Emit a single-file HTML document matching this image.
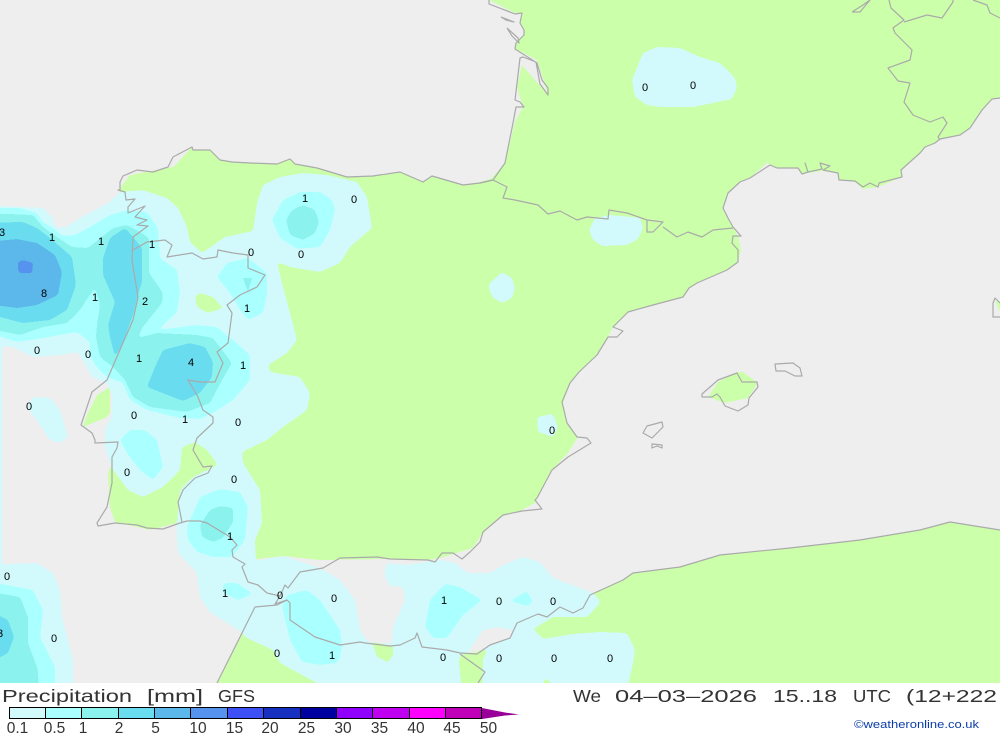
<!DOCTYPE html>
<html><head><meta charset="utf-8"><title>Precipitation GFS</title>
<style>html,body{margin:0;padding:0;background:#fff;width:1000px;height:733px;overflow:hidden}svg{display:block}text{font-family:"Liberation Sans",sans-serif}</style></head>
<body>
<svg width="1000" height="733" viewBox="0 0 1000 733" xmlns="http://www.w3.org/2000/svg">
<defs>
<filter id="s" filterUnits="userSpaceOnUse" x="-30" y="0" width="1060" height="733" color-interpolation-filters="sRGB">
<feGaussianBlur stdDeviation="1.8"/>
<feComponentTransfer><feFuncA type="discrete" tableValues="0 1"/></feComponentTransfer>
</filter>
<filter id="t" filterUnits="userSpaceOnUse" x="-30" y="0" width="1060" height="733" color-interpolation-filters="sRGB">
<feGaussianBlur stdDeviation="1"/>
<feComponentTransfer><feFuncA type="discrete" tableValues="0 1"/></feComponentTransfer>
</filter>
</defs>
<rect width="1000" height="683" fill="#eeeeee"/>
<polygon fill="#ccffaa" shape-rendering="crispEdges" points="489,0 515,13 522,13 520,23 524,30 523,37 516,43 516,49 537,60 543,78 548,95 522,65 517,87 523,107 515,122 505,163 492,178 480,182 463,185 432,176 423,182 400,172 373,176 347,177 317,168 295,164 290,159 277,164 250,163 232,162 220,160 210,150 193,150 192,147 180,160 173,167 130,175 120,188 120,200 140,300 140,440 110,468 108,473 110,507 115,522 150,530 177,523 200,530 250,560 283,556 320,560 390,559 428,560 440,558 473,548 480,537 483,532 500,517 520,511 535,503 537,498 552,470 568,453 578,437 567,422 563,403 570,383 579,372 597,355 608,337 613,327 628,312 653,305 683,297 689,288 697,283 727,270 738,262 741,250 738,236 728,218 723,208 728,193 740,182 750,178 767,163 777,168 798,168 802,174 822,171 838,173 839,180 855,182 863,189 878,187 902,177 901,170 920,153 925,147 935,143 940,139 960,135 970,128 982,110 992,99 1000,98 1000,0"/>
<g shape-rendering="crispEdges" fill="#ccffaa">
<polygon points="217,683 255,607 277,605 290,620 315,637 340,646 390,646 415,638 447,650 477,654 510,638 517,623 538,614 560,607 583,608 590,595 623,580 633,573 680,567 720,555 790,548 860,540 920,530 950,522 1000,530 1000,683"/>
<polygon points="110,387 97,395 87,415 83,427 105,418 110,413"/>
<polygon points="708,397 718,382 737,372 743,372 758,383 748,398 725,403"/>
<polygon points="995,300 1000,303 1000,312"/>
</g>

<!-- 0.1 level -->
<g fill="#d2fafc" filter="url(#s)">
<polygon points="-20,205 43,208 53,218 55,227 65,228 80,218 110,202 120,192 143,190 167,198 178,208 187,227 190,242 202,253 225,237 253,231 257,203 263,185 280,177 303,173 327,175 357,182 367,197 372,228 350,247 340,263 320,272 290,267 277,262 283,287 290,313 297,340 287,353 268,365 270,372 300,377 310,393 307,410 283,427 267,440 242,452 243,463 260,490 262,523 255,540 256,561 283,556 320,568 340,580 355,600 360,630 368,642 392,644 393,627 405,600 403,587 390,586 385,577 385,567 388,563 407,565 440,560 453,562 468,573 490,573 503,565 523,557 540,562 553,578 593,593 601,602 587,617 553,617 533,629 543,639 573,634 600,632 627,633 635,650 633,663 625,700 560,700 547,677 532,700 345,700 317,683 280,663 273,650 245,637 243,633 210,612 200,597 197,573 178,553 177,537 177,523 180,490 193,477 218,465 207,450 195,442 182,447 180,470 163,487 143,497 128,490 112,468 105,447 105,430 112,415 112,395 107,383 92,377 78,352 60,355 33,357 13,347 -20,345"/>
<polygon points="27,407 33,397 50,398 60,410 68,437 60,443 50,440 40,425"/>
<polygon points="-20,565 37,563 53,573 60,590 62,617 73,660 73,700 -20,700"/>
<polygon points="632,80 643,53 657,47 680,48 700,57 720,63 735,78 737,88 732,99 693,107 660,107 647,105 635,97"/>
<polygon points="589,230 595,218 610,215 640,218 643,228 638,239 627,245 602,246 593,240"/>
<polygon points="488,285 502,272 512,278 515,288 512,298 502,303 492,297"/>
<polygon points="537,417 553,414 558,427 553,437 538,432"/>
</g>
<rect x="0" y="345" width="2" height="220" fill="#d2fafc" shape-rendering="crispEdges"/>
<g filter="url(#t)">
<polygon fill="#eeeeee" points="467,654 483,630 497,627 513,630 510,638 490,645 477,654"/>
<polygon fill="#ccffaa" points="195,297 200,293 213,297 223,308 208,313 197,307"/>
<polygon fill="#ccffaa" points="372,642 393,646 393,655 388,662 377,657"/>
<polygon fill="#ccffaa" points="460,655 487,650 483,660 482,700 463,700 459,663"/>
</g>

<!-- 0.5 level -->
<g fill="#aaffff" filter="url(#s)">
<polygon points="-20,208 20,208 37,213 43,222 53,228 63,236 75,235 90,227 110,215 127,210 147,212 158,228 160,258 177,270 180,292 177,312 158,330 197,325 217,327 233,340 250,355 250,380 233,400 213,413 200,419 180,418 147,410 130,400 123,383 107,377 95,365 90,355 90,342 77,332 43,338 17,342 -20,330"/>
<polygon points="272,220 283,200 300,192 320,192 332,200 335,210 330,230 320,247 297,249 280,238"/>
<polygon points="217,277 227,263 248,258 267,273 267,293 263,313 248,320 240,310 230,293"/>
<polygon points="120,440 130,430 145,430 157,440 163,467 153,480 140,470 127,453"/>
<polygon points="187,527 200,497 220,489 240,492 248,507 245,540 232,557 213,557 197,552 188,540"/>
<polygon points="222,592 224,583 237,583 253,594 238,600"/>
<polygon points="282,607 287,595 307,590 320,600 340,630 342,647 340,657 337,663 320,665 302,662 290,640"/>
<polygon points="425,627 430,600 445,584 460,587 482,600 463,615 447,638 433,638"/>
<polygon points="510,601 527,591 533,602 527,606"/>
<polygon points="-20,580 33,590 43,610 40,637 55,667 55,700 -20,700"/>
</g>
<!-- 1 level -->
<g fill="#8cf2ee" filter="url(#s)">
<polygon points="-20,213 33,215 43,227 57,237 72,247 88,248 113,228 127,225 140,232 149,238 149,273 163,293 162,303 142,328 138,338 157,333 197,335 213,338 232,363 222,380 210,403 187,412 150,407 133,397 125,380 113,367 100,357 96,337 97,325 100,305 95,287 80,310 67,323 43,327 20,335 -20,327"/>
<polygon points="286,220 292,210 303,205 315,210 319,222 315,233 303,240 290,235"/>
<polygon points="200,525 210,510 220,506 233,508 233,522 223,538 213,542 202,537"/>
<polygon points="-20,590 20,597 28,617 28,643 38,670 39,700 -20,700"/>
</g>
<polygon fill="#8cf2ee" shape-rendering="crispEdges" points="243,278 252,278 248,292"/>
<!-- 2 level -->
<g fill="#6adcf0" filter="url(#s)">
<polygon points="-20,223 23,222 37,228 50,238 72,257 76,285 67,310 50,320 23,323 -20,312"/>
<polygon points="125,228 133,237 142,248 142,282 137,298 133,315 122,345 115,357 110,337 108,325 115,302 103,275 103,258 110,238"/>
<polygon points="163,350 190,343 205,347 213,362 212,377 200,393 183,401 147,387 155,367"/>
<polygon points="-20,606 8,620 14,637 8,653 -20,668"/>
</g>
<polygon fill="#5cb8ea" filter="url(#s)" points="-20,243 17,239 37,243 55,255 62,272 58,295 37,305 17,308 -20,303"/>
<polygon fill="#5593ee" filter="url(#t)" points="18,262 23,260 33,263 32,273 20,273 18,270"/>

<!-- coastlines and borders -->
<g fill="none" stroke="#aaaaaa" stroke-width="1.2" stroke-linejoin="round">
<polyline points="489,0 489,4 515,14 522,13 520,23 524,30 524,35 516,43 515,49 537,63 542,80 548,88 548,95 540,84 536,62 523,57 520,58 515,100 520,102 524,107 516,107 513,123 505,163 493,180 480,183 463,185 432,176 423,182 400,172 373,176 347,177 317,168 295,164 290,159 277,164 250,163 232,162 220,160 210,150 193,150 192,147 173,157 168,167 153,172 137,170 123,176 120,182 120,190 118,190 125,192 126,200 135,199 128,207 128,213 145,206 135,217 147,220 137,225 148,226 133,237 132,260 138,297 133,320 122,345 107,380 92,392 87,407 81,425 92,433 95,440 95,443 118,442 117,448 112,457 112,483 107,507 97,523 98,526 115,523 137,525 147,528 163,529 180,523 187,521 200,521 207,523 230,537 237,545 232,550 233,557 245,564 242,567 248,582 258,585 267,593 280,596 285,585 288,588 300,572 323,568 340,558 377,557 390,559 428,560 435,562 442,553 453,553 462,559 470,552 480,542 483,532 503,515 522,511 542,509 535,500 537,498 552,470 568,457 591,443 587,438 577,437 567,423 562,402 570,383 579,372 597,355 608,337 617,337 623,331 613,327 628,312 653,305 683,297 689,288 697,283 727,270 738,262 738,250 732,243 733,236 741,236 733,227 728,218 723,208 728,193 740,182 750,178 770,165 777,168 798,168 802,174 808,172 805,163 808,172 822,169 820,163 830,166 823,170 838,173 839,180 855,181 863,187 870,183 878,187 879,183 902,177 901,170 920,153 925,147 935,143 940,139 960,135 970,128 982,110 992,99 1000,98"/>
<polyline points="133,250 147,242 165,240 172,245 167,257 192,253 203,259 217,257 218,250 233,253 248,255 248,268 265,275 257,287 240,295 227,305 232,313 228,343 217,352 223,363 215,382 200,382 188,380 198,397 203,410 213,417 213,423 197,438 193,450 203,467 212,466 208,473 195,478 183,490 178,502 182,522"/>
<polyline points="480,183 493,180 507,187 503,198 515,200 538,205 548,214 560,211 577,220 587,217 608,219 609,210 627,213 647,220 663,222 653,232 647,232 647,220"/>
<polyline points="663,227 677,237 688,232 702,237 713,230 733,228"/>
<polyline points="217,683 255,607 277,605 287,600 290,603 290,620 315,637 340,645 360,642 365,643 390,646 400,645 415,638 417,633 422,647 447,650 460,653 477,654 490,645 510,638 517,623 538,614 547,617 560,607 573,613 583,608 590,595 623,580 633,573 680,567 720,555 790,548 860,540 920,530 950,522 1000,530"/>
<polyline points="460,654 485,672 478,683"/>
<polyline points="280,596 275,604 287,600"/>
<polyline points="889,0 891,8 904,20 893,28 895,33 912,50 910,60 888,68 898,81 910,83 904,102 913,115 930,122 943,117 947,123 938,137 940,140"/>
<polyline points="904,22 927,15 942,18 953,2 953,0"/>
<polyline points="973,0 987,5 990,13 1000,18"/>
<polyline points="852,12 863,5 870,0 860,12 852,12"/>
<polyline points="501,17 514,22 506,20 501,17"/>
<polyline points="507,28 518,38 519,43 512,36 507,28"/>
<polygon points="702,394 718,380 737,373 742,382 757,382 758,387 749,398 748,405 738,411 725,406 720,397 717,394 712,397 702,397"/>
<polygon points="775,364 793,363 800,368 802,376 795,376 785,371 776,371"/>
<polygon points="643,433 647,426 662,422 663,427 652,438"/>
<polygon points="652,444 662,445 662,448 657,446 652,448"/>
<polyline points="1000,303 995,298 993,303 993,317 1000,317"/>
</g>

<!-- value labels -->
<g font-size="11" text-anchor="middle" fill="#000">
<text x="645" y="91">0</text><text x="693" y="89">0</text><text x="305" y="202">1</text><text x="354" y="203">0</text><text x="2" y="236">3</text><text x="52" y="241">1</text><text x="101" y="245">1</text><text x="152" y="248">1</text><text x="251" y="256">0</text><text x="301" y="258">0</text><text x="247" y="312">1</text><text x="44" y="297">8</text><text x="95" y="301">1</text><text x="145" y="305">2</text><text x="37" y="354">0</text><text x="88" y="358">0</text><text x="139" y="362">1</text><text x="191" y="366">4</text><text x="243" y="369">1</text><text x="29" y="410">0</text><text x="134" y="419">0</text><text x="185" y="423">1</text><text x="238" y="426">0</text><text x="552" y="434">0</text><text x="127" y="476">0</text><text x="234" y="483">0</text><text x="230" y="540">1</text><text x="7" y="580">0</text><text x="225" y="597">1</text><text x="280" y="599">0</text><text x="334" y="602">0</text><text x="444" y="604">1</text><text x="499" y="605">0</text><text x="553" y="605">0</text><text x="0" y="637">3</text><text x="54" y="642">0</text><text x="277" y="657">0</text><text x="332" y="659">1</text><text x="443" y="661">0</text><text x="499" y="662">0</text><text x="554" y="662">0</text><text x="610" y="662">0</text>
</g>

<rect y="683" width="1000" height="50" fill="#fff"/>

<!-- title strings -->
<g font-size="17.5" fill="#333" lengthAdjust="spacingAndGlyphs">
<text x="2" y="702" textLength="130" lengthAdjust="spacingAndGlyphs">Precipitation</text>
<text x="147" y="702" textLength="56" lengthAdjust="spacingAndGlyphs">[mm]</text>
<text x="218" y="702" textLength="37" lengthAdjust="spacingAndGlyphs">GFS</text>
<text x="573" y="702" textLength="28" lengthAdjust="spacingAndGlyphs">We</text>
<text x="615" y="702" textLength="142" lengthAdjust="spacingAndGlyphs">04–03–2026</text>
<text x="773" y="702" textLength="64" lengthAdjust="spacingAndGlyphs">15..18</text>
<text x="853" y="702" textLength="38" lengthAdjust="spacingAndGlyphs">UTC</text>
<text x="906" y="702" textLength="91" lengthAdjust="spacingAndGlyphs">(12+222</text>
</g>
<text x="854" y="728" font-size="11" textLength="125" lengthAdjust="spacingAndGlyphs" fill="#0a3ca8">©weatheronline.co.uk</text>

<!-- legend -->
<g shape-rendering="crispEdges" stroke="#000" stroke-width="1">
<rect x="9.5" y="707.5" width="36" height="11" fill="#d2fafa"/>
<rect x="45.5" y="707.5" width="36" height="11" fill="#aaffff"/>
<rect x="81.5" y="707.5" width="37" height="11" fill="#8cf2ee"/>
<rect x="118.5" y="707.5" width="36" height="11" fill="#6adcf0"/>
<rect x="154.5" y="707.5" width="36" height="11" fill="#5cb8ea"/>
<rect x="190.5" y="707.5" width="37" height="11" fill="#5593ee"/>
<rect x="227.5" y="707.5" width="36" height="11" fill="#3c50f5"/>
<rect x="263.5" y="707.5" width="37" height="11" fill="#1830c0"/>
<rect x="300.5" y="707.5" width="36" height="11" fill="#0000a0"/>
<rect x="336.5" y="707.5" width="36" height="11" fill="#9000ff"/>
<rect x="372.5" y="707.5" width="37" height="11" fill="#c000f0"/>
<rect x="409.5" y="707.5" width="36" height="11" fill="#ff00ff"/>
<rect x="445.5" y="707.5" width="36" height="11" fill="#c000b8"/>
</g>
<polygon points="482,708 505,712.5 519,714.5 505,715.5 482,719" fill="#980098"/>
<g font-size="15.5" fill="#333" text-anchor="middle">
<text x="17.5" y="733">0.1</text><text x="54.5" y="733">0.5</text><text x="83" y="733">1</text><text x="119" y="733">2</text><text x="155.5" y="733">5</text><text x="198" y="733">10</text><text x="234.5" y="733">15</text><text x="270" y="733">20</text><text x="306.5" y="733">25</text><text x="343" y="733">30</text><text x="379.5" y="733">35</text><text x="416" y="733">40</text><text x="452" y="733">45</text><text x="488.5" y="733">50</text>
</g>
</svg>
</body></html>
